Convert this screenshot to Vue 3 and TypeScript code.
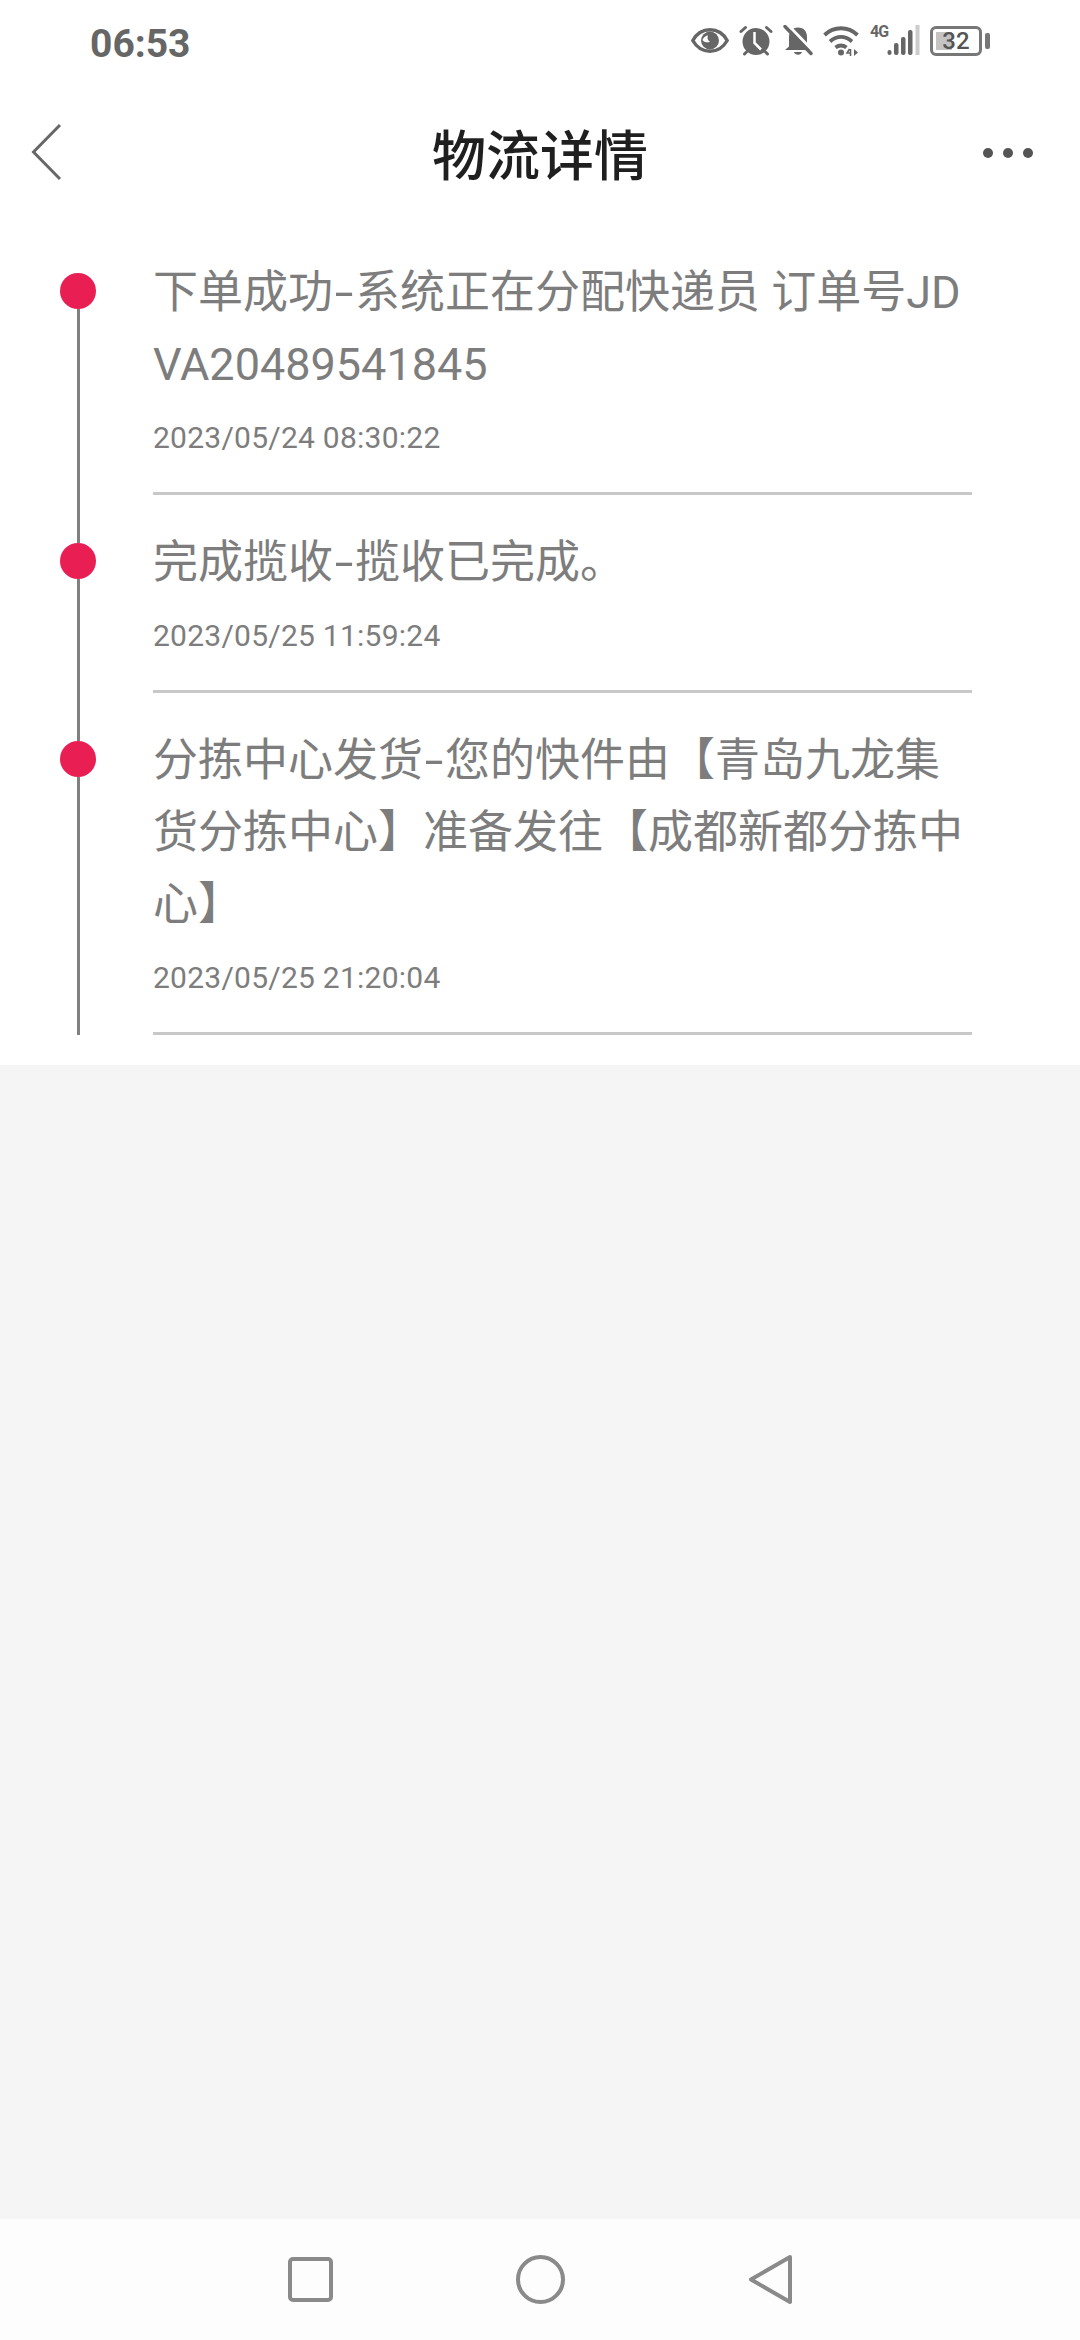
<template>
  <div class="screen">
    <div class="status-bar">
      <span class="clock">06:53</span>
      <div class="status-icons">
        <svg width="38" height="25" viewBox="0 0 38 25">
          <path d="M1.800 12.500C6 5 12 1.800 19 1.800S32 5 36.200 12.500C32 20 26 23.200 19 23.200S6 20 1.800 12.500Z" fill="none" stroke="#666" stroke-width="3.400" />
          <circle cx="19" cy="12.500" r="9" fill="#666" />
          <path d="M11.500 12c1-3 3.500-4.500 5.500-4.500-1 2-.5 5 2 6-2 1.500-6 1-7.500-1.500Z" fill="#fff" />
        </svg>
        <svg width="34" height="31" viewBox="0 0 34 31">
          <circle cx="17" cy="16.500" r="13.500" fill="#666" />
          <path d="M2 6.500L6.500 2.500M32 6.500L27.500 2.500M5.500 29l2-2M28.500 29l-2-2" stroke="#666" stroke-width="3" stroke-linecap="round" fill="none" />
          <path d="M15.500 7v11l6.500 6.500" stroke="#fff" stroke-width="2.500" fill="none" />
        </svg>
        <svg width="30" height="31" viewBox="0 0 30 31">
          <path d="M15 2.500c6 0 9 4 9 10v9l4 3.500H2l4-3.500v-9C6 6.500 9 2.500 15 2.500Z" fill="#666" />
          <path d="M11 27h8c-1 3.500-7 3.500-8 0Z" fill="#666" />
          <path d="M5 0l26 27" stroke="#fff" stroke-width="3" />
          <path d="M2 1.500l26 27" stroke="#666" stroke-width="3.400" stroke-linecap="round" />
        </svg>
        <svg width="37" height="31" viewBox="0 0 37 31">
          <path d="M1.500 10C11 1 25 1 34.500 10M7 16.500c7-6 15-6 22 0M12.500 22.500c4-3 7-3 11 0" fill="none" stroke="#666" stroke-width="3.800" />
          <circle cx="18" cy="27.500" r="3" fill="#666" />
          <path d="M26.500 24l-2.500 4h3.500M27.500 24v7" stroke="#666" stroke-width="1.600" fill="none" />
          <path d="M31 24v7l4-3.500Z" fill="#666" />
        </svg>
        <div class="signal">
          <span class="net">4G</span>
          <svg width="33" height="31" viewBox="0 0 33 31">
            <rect x="0.500" y="25" width="4" height="5" rx="2" fill="#666" />
            <rect x="7" y="18" width="4.500" height="12" rx="2" fill="#666" />
            <rect x="14" y="12" width="4.500" height="18" rx="2" fill="#666" />
            <rect x="21" y="5" width="4.500" height="25" rx="2" fill="#666" />
            <rect x="28.500" y="0" width="4" height="30" fill="#ccc" />
          </svg>
        </div>
        <div class="battery">
          <div class="battery-body">
            <span class="battery-fill"></span>
            <span class="battery-num">32</span>
          </div>
          <span class="battery-nub"></span>
        </div>
      </div>
    </div>

    <div class="nav-bar">
      <svg class="back" width="30" height="58" viewBox="0 0 30 58">
        <path d="M29 2L2.500 29L29 56" fill="none" stroke="#666" stroke-width="3" />
      </svg>
      <span class="nav-title">物流详情</span>
      <div class="more">
        <i></i><i></i><i></i>
      </div>
    </div>

    <div class="timeline">
      <div v-for="(item, i) in items" :key="i" class="row">
        <div class="rail">
          <span class="rail-top" :class="{ hidden: i === 0 }"></span>
          <span class="dot"></span>
          <span class="rail-line"></span>
        </div>
        <div class="body">
          <div class="line">{{ item.head }}<span class="dash">-</span>{{ item.tail }}</div>
          <div v-for="line in item.more" :key="line" class="line">{{ line }}</div>
          <div class="time">{{ item.time }}</div>
        </div>
      </div>
    </div>

    <div class="empty"></div>

    <div class="sys-nav">
      <svg width="49" height="49" viewBox="0 0 49 49">
        <rect x="4" y="4" width="41" height="41" rx="3" fill="none" stroke="#8a8a8a" stroke-width="4" />
      </svg>
      <svg width="49" height="49" viewBox="0 0 49 49">
        <circle cx="24.500" cy="24.500" r="22.500" fill="none" stroke="#8a8a8a" stroke-width="4" />
      </svg>
      <svg width="45" height="51" viewBox="0 0 45 51">
        <path d="M42 3L3 25.500L42 48Z" fill="none" stroke="#8a8a8a" stroke-width="4" stroke-linejoin="round" />
      </svg>
    </div>
  </div>
</template>

<script setup lang="ts">
interface LogisticsItem {
  head: string;
  tail: string;
  more: string[];
  time: string;
}

const items: LogisticsItem[] = [
  {
    head: '下单成功',
    tail: '系统正在分配快递员 订单号JD',
    more: ['VA20489541845'],
    time: '2023/05/24 08:30:22'
  },
  {
    head: '完成揽收',
    tail: '揽收已完成。',
    more: [],
    time: '2023/05/25 11:59:24'
  },
  {
    head: '分拣中心发货',
    tail: '您的快件由【青岛九龙集',
    more: ['货分拣中心】准备发往【成都新都分拣中', '心】'],
    time: '2023/05/25 21:20:04'
  }
];
</script>

<style>
html,
body {
  margin: 0;
  background: #f5f5f5;
}
</style>

<style scoped>
.screen {
  width: 1080px;
  height: 2340px;
  display: flex;
  flex-direction: column;
  background: #f5f5f5;
  font-family: Roboto, "Noto Sans CJK SC", sans-serif;
  overflow: hidden;
}

.status-bar {
  height: 84px;
  flex: none;
  display: flex;
  align-items: center;
  justify-content: space-between;
  padding: 0 90px;
  background: #fff;
  box-sizing: border-box;
}

.clock {
  font-size: 39px;
  font-weight: 700;
  color: #666;
  line-height: 84px;
  margin-top: 4px;
}

.status-icons {
  display: flex;
  align-items: center;
  gap: 10px;
  height: 31px;
  margin-top: -3px;
}

.signal {
  position: relative;
  width: 50px;
  height: 31px;
  display: flex;
  justify-content: flex-end;
}

.net {
  position: absolute;
  left: 0;
  top: -1px;
  font-size: 16px;
  font-weight: 700;
  line-height: 16px;
  letter-spacing: -1px;
  color: #666;
}

.battery {
  display: flex;
  align-items: center;
  gap: 3px;
}

.battery-body {
  position: relative;
  width: 52px;
  height: 30px;
  box-sizing: border-box;
  border: 3px solid #777;
  border-radius: 6px;
  display: flex;
  align-items: center;
  justify-content: center;
}

.battery-fill {
  position: absolute;
  left: 3px;
  top: 3px;
  bottom: 3px;
  width: 16px;
  background: #c4c4c4;
}

.battery-num {
  position: relative;
  font-size: 24px;
  font-weight: 500;
  line-height: 24px;
  color: #555;
}

.battery-nub {
  width: 5px;
  height: 16px;
  border-radius: 2px;
  background: #777;
}

.nav-bar {
  position: relative;
  height: 141px;
  flex: none;
  display: flex;
  align-items: center;
  justify-content: center;
  background: #fff;
}

.back {
  position: absolute;
  left: 31px;
  top: 39px;
}

.nav-title {
  font-size: 54px;
  font-weight: 500;
  color: #1f1f1f;
  line-height: 70px;
  margin-top: 6px;
}

.more {
  position: absolute;
  right: 47px;
  top: 64px;
  display: flex;
  gap: 10px;
}

.more i {
  width: 10px;
  height: 10px;
  border-radius: 50%;
  background: #555;
}

.timeline {
  flex: none;
  background: #fff;
  padding-bottom: 30px;
}

.row {
  display: flex;
  padding-left: 60px;
}

.rail {
  width: 36px;
  flex: none;
  display: flex;
  flex-direction: column;
  align-items: center;
  margin-right: 57px;
}

.rail-top {
  width: 3px;
  height: 48px;
  background: #808080;
}

.rail-top.hidden {
  background: transparent;
}

.dot {
  width: 36px;
  height: 36px;
  flex: none;
  border-radius: 50%;
  background: #e91e52;
}

.rail-line {
  width: 3px;
  flex: 1;
  background: #808080;
}

.body {
  width: 819px;
  box-sizing: border-box;
  border-bottom: 3px solid #c8c8c8;
  padding: 32px 0 34px;
}

.line {
  font-size: 45px;
  line-height: 72px;
  color: #7d7d7d;
  white-space: nowrap;
}

.dash {
  display: inline-block;
  width: 22px;
  text-align: center;
  transform: scaleX(1.5);
}

.time {
  margin-top: 17px;
  font-size: 30px;
  line-height: 40px;
  letter-spacing: 0.25px;
  color: #7d7d7d;
}

.empty {
  flex: 1;
  background: #f5f5f5;
}

.sys-nav {
  height: 121px;
  flex: none;
  display: grid;
  grid-template-columns: repeat(3, 1fr);
  justify-items: center;
  align-items: center;
  padding: 0 195px;
  background: #fdfdfd;
}
</style>
